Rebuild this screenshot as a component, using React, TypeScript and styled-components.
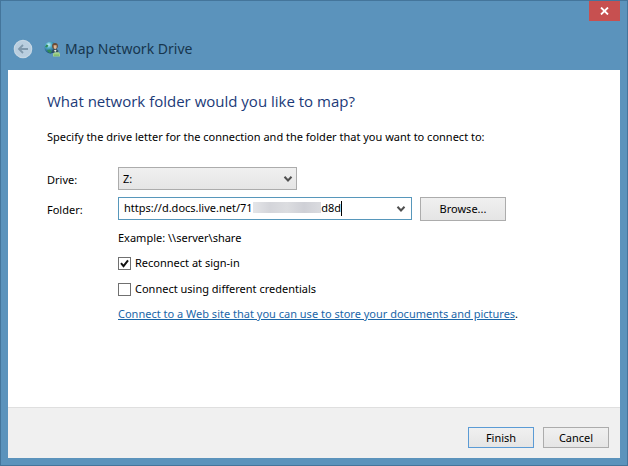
import React, { useState } from "react";
import styled, { createGlobalStyle } from "styled-components";

const GlobalStyle = createGlobalStyle`
  * { box-sizing: border-box; }
  body {
    margin: 0;
    font-family: "Noto Sans", "Open Sans", sans-serif;
    font-size: 11px;
    line-height: 16px;
    color: #000;
  }
  button, input, select { font: inherit; color: inherit; margin: 0; }
`;

const Window = styled.form`
  display: flex;
  flex-direction: column;
  min-height: 100vh;
  padding: 0 7px 7px;
  background: #5b93bc;
  border: 1px solid #44759b;
`;

const CaptionBar = styled.div`
  display: flex;
  justify-content: flex-end;
  height: 20px;
`;

const CloseButton = styled.button`
  display: flex;
  align-items: center;
  justify-content: center;
  width: 31px;
  height: 20px;
  padding: 0;
  border: 0;
  background: #c75050;
`;

const Header = styled.header`
  display: flex;
  align-items: center;
  height: 49px;
  padding: 6px 5px 0;
`;

const BackButton = styled.button`
  display: flex;
  width: 20px;
  height: 20px;
  margin-right: 11px;
  padding: 0;
  border: 0;
  background: none;
`;

const WindowTitle = styled.h1`
  margin: 0 0 0 5px;
  font-size: 14px;
  font-weight: 400;
  line-height: 20px;
  color: #17364e;
`;

const Content = styled.main`
  flex: 1;
  padding: 20px 39px;
  background: #fff;
`;

const Heading = styled.h2`
  margin: 0 0 17px;
  font-family: "Open Sans", "Noto Sans", sans-serif;
  font-size: 15px;
  font-weight: 400;
  line-height: 22px;
  color: #1b3a78;
`;

const Instruction = styled.p`
  margin: 0 0 22px;
`;

const FieldRow = styled.div`
  display: flex;
  align-items: center;
  height: 23px;
  margin-bottom: 7px;
`;

const FieldLabel = styled.label`
  flex: 0 0 71px;
  padding-top: 2px;
`;

const SelectFrame = styled.div`
  display: grid;
  align-items: center;
  width: 179px;
  height: 23px;

  > * { grid-area: 1 / 1; }
  > svg { justify-self: end; margin-right: 4px; pointer-events: none; }
`;

const DriveSelect = styled.select`
  appearance: none;
  width: 100%;
  height: 100%;
  padding: 0 20px 0 4px;
  border: 1px solid #acacac;
  border-radius: 0;
  background: linear-gradient(#f0f0f0, #e5e5e5);
  outline: none;
`;

const ComboBox = styled.div`
  position: relative;
  display: flex;
  width: 294px;
  height: 23px;
  margin-right: 8px;
  border: 1px solid #5797bb;
  background: #fff;
`;

const FolderInput = styled.input`
  flex: 1;
  min-width: 0;
  padding: 0 0 2px 5px;
  border: 0;
  outline: none;
  background: none;
`;

const ComboButton = styled.button`
  display: flex;
  align-items: center;
  justify-content: center;
  width: 18px;
  padding: 0 2px 0 0;
  border: 0;
  background: none;
`;

const Redaction = styled.span`
  position: absolute;
  left: 134px;
  top: 4px;
  width: 68px;
  height: 11px;
  background: linear-gradient(90deg, #e4e5e8, #d4d5da 25%, #dcdde0 50%, #cfd0d6 75%, #dadbdf);
`;

const Caret = styled.span`
  position: absolute;
  left: 222px;
  top: 3px;
  width: 1px;
  height: 15px;
  background: #000;
`;

const PushButton = styled.button<{ $wide?: boolean; $primary?: boolean }>`
  width: ${(p) => (p.$wide ? 86 : 66)}px;
  height: ${(p) => (p.$wide ? 24 : 21)}px;
  padding: 0;
  border: 1px solid ${(p) => (p.$primary ? "#5b9bd5" : "#acacac")};
  background: linear-gradient(#f0f0f0, #e5e5e5);
`;

const Options = styled.div`
  display: flex;
  flex-direction: column;
  align-items: flex-start;
  margin-left: 71px;
  padding-top: 3px;
`;

const Example = styled.p`
  margin: 0 0 8px;
`;

const CheckLabel = styled.label`
  display: flex;
  align-items: center;
  gap: 4px;
  height: 18px;
  margin-bottom: 8px;
`;

const CheckFrame = styled.span`
  display: grid;
  width: 13px;
  height: 13px;

  > * { grid-area: 1 / 1; }
  > svg { pointer-events: none; }
`;

const CheckInput = styled.input`
  appearance: none;
  width: 13px;
  height: 13px;
  border: 1px solid #707070;
  background: #fff;
`;

const LinkLine = styled.p`
  margin: 0;
`;

const Link = styled.a`
  color: #1a66a8;
  text-decoration: underline;
`;

const Footer = styled.footer`
  display: flex;
  justify-content: flex-end;
  gap: 9px;
  padding: 19px 11px 10px;
  border-top: 1px solid #dfdfdf;
  background: #f0f0f0;
`;

function Chevron() {
  return (
    <svg width="10" height="8" viewBox="0 0 10 8" aria-hidden="true">
      <path d="M1.5 1.8 5 5.5 8.5 1.8" fill="none" stroke="#505050" strokeWidth="2" />
    </svg>
  );
}

function NetworkDriveIcon() {
  return (
    <svg width="16" height="16" viewBox="0 0 16 16" aria-hidden="true">
      <defs>
        <radialGradient id="globe" cx="35%" cy="28%" r="75%">
          <stop offset="0" stopColor="#c9f4f5" />
          <stop offset=".35" stopColor="#4fadc8" />
          <stop offset="1" stopColor="#123c6c" />
        </radialGradient>
      </defs>
      <circle cx="6.5" cy="6.5" r="6" fill="url(#globe)" />
      <path d="M1 6 2.5 3.5 4.5 4.5 3 6.5ZM3 9 6 8.5 8 11 6 12.3 4 11Z" fill="#2f8a55" />
      <path d="M8 11.5 8.5 9 10 8h2.5l1.8 1.5v2Z" fill="#35505c" />
      <circle cx="11" cy="5" r="2.9" fill="#6b4a34" />
      <path d="M9.6 4.2h3v2.6L11.2 8.6 9.8 7Z" fill="#dcb896" />
      <path d="m10 9 1.2 2.4L12.5 9Z" fill="#e9ece4" />
      <path d="M9 12.5 11 11.2h4l1 1.8v2.5H9Z" fill="#a3d08c" />
      <path d="M10 13.5h5v1.2h-5Z" fill="#78b868" />
    </svg>
  );
}

export default function App() {
  const [drive, setDrive] = useState("Z:");
  const [folder, setFolder] = useState("https://d.docs.live.net/71" + " ".repeat(24) + "d8d");
  const [reconnect, setReconnect] = useState(true);
  const [otherCredentials, setOtherCredentials] = useState(false);

  return (
    <>
      <GlobalStyle />
      <Window onSubmit={(e) => e.preventDefault()}>
        <CaptionBar>
          <CloseButton type="button" aria-label="Close">
            <svg width="9" height="8" viewBox="0 0 9 8" aria-hidden="true">
              <path d="m1 .5 7 7m0-7-7 7" stroke="#fff" strokeWidth="1.8" />
            </svg>
          </CloseButton>
        </CaptionBar>
        <Header>
          <BackButton type="button" aria-label="Back">
            <svg width="20" height="20" viewBox="0 0 20 20" aria-hidden="true">
              <circle cx="10" cy="10" r="8.7" fill="#b9cedf" stroke="#c6d7e4" strokeWidth="1.2" />
              <path d="M15 10H6m4-4-4 4 4 4" fill="none" stroke="#7f98ac" strokeWidth="1.8" />
            </svg>
          </BackButton>
          <NetworkDriveIcon />
          <WindowTitle>Map Network Drive</WindowTitle>
        </Header>
        <Content>
          <Heading>What network folder would you like to map?</Heading>
          <Instruction>
            Specify the drive letter for the connection and the folder that you want to connect to:
          </Instruction>
          <FieldRow>
            <FieldLabel htmlFor="drive">Drive:</FieldLabel>
            <SelectFrame>
              <DriveSelect id="drive" value={drive} onChange={(e) => setDrive(e.target.value)}>
                <option>Z:</option>
              </DriveSelect>
              <Chevron />
            </SelectFrame>
          </FieldRow>
          <FieldRow>
            <FieldLabel htmlFor="folder">Folder:</FieldLabel>
            <ComboBox>
              <FolderInput id="folder" value={folder} onChange={(e) => setFolder(e.target.value)} />
              <Redaction />
              <Caret />
              <ComboButton type="button" aria-label="Recent folders">
                <Chevron />
              </ComboButton>
            </ComboBox>
            <PushButton type="button" $wide>Browse...</PushButton>
          </FieldRow>
          <Options>
            <Example>Example: \\server\share</Example>
            <CheckLabel>
              <CheckFrame>
                <CheckInput type="checkbox" checked={reconnect} onChange={(e) => setReconnect(e.target.checked)} />
                {reconnect && (
                  <svg width="13" height="13" viewBox="0 0 13 13" aria-hidden="true">
                    <path d="m3 6.2 2.5 2.9L10 3.3" fill="none" stroke="#111" strokeWidth="2" />
                  </svg>
                )}
              </CheckFrame>
              Reconnect at sign-in
            </CheckLabel>
            <CheckLabel>
              <CheckFrame>
                <CheckInput
                  type="checkbox"
                  checked={otherCredentials}
                  onChange={(e) => setOtherCredentials(e.target.checked)}
                />
              </CheckFrame>
              Connect using different credentials
            </CheckLabel>
            <LinkLine>
              <Link href="#web-site">Connect to a Web site that you can use to store your documents and pictures</Link>.
            </LinkLine>
          </Options>
        </Content>
        <Footer>
          <PushButton type="submit" $primary>Finish</PushButton>
          <PushButton type="button">Cancel</PushButton>
        </Footer>
      </Window>
    </>
  );
}
